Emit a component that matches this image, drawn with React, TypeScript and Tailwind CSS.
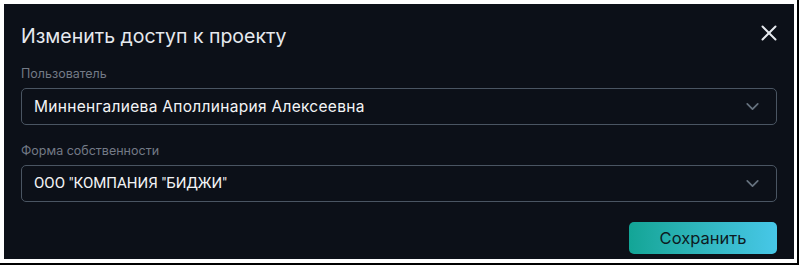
import { X, ChevronDown } from "lucide-react";

const font = { fontFamily: "Inter, 'Noto Sans', sans-serif" };

function SelectField({
  label,
  value,
  valueClass,
}: {
  label: string;
  value: string;
  valueClass: string;
}) {
  return (
    <div className="flex flex-col">
      <span className="text-[12.5px] leading-[20px] text-[#737a86]">{label}</span>
      <div className="mt-[4px] flex h-[37px] items-center justify-between rounded-[5px] border border-[#4a5562] pl-[12px] pr-[13px]">
        <span className={valueClass}>{value}</span>
        <ChevronDown size={21} strokeWidth={2} className="text-[#66717e]" />
      </div>
    </div>
  );
}

export default function App() {
  return (
    <div className="h-[265px] w-[801px] bg-white" style={font}>
      <div className="h-[265px] w-[799px] border-b-2 border-r-2 border-black pl-[4px] pt-[4px]">
        <div className="flex h-[255px] w-[790px] flex-col bg-[#0c1018] px-[17px] pt-[20px]">
          <div className="flex items-start justify-between">
            <h2 className="text-[19.5px] leading-[24px] text-[#e6e9ee]">Изменить доступ к проекту</h2>
            <X size={26} strokeWidth={1.8} className="mr-[-5px] mt-[-4px] text-[#e6e9ee]" />
          </div>
          <div className="mt-[16px] flex flex-col gap-[16px]">
            <SelectField
              label="Пользователь"
              value="Минненгалиева Аполлинария Алексеевна"
              valueClass="text-[15.5px] tracking-[0.3px] text-[#f3f4f6]"
            />
            <SelectField
              label="Форма собственности"
              value={'ООО "КОМПАНИЯ "БИДЖИ"'}
              valueClass="font-['Roboto',sans-serif] text-[15px] text-[#f3f4f6]"
            />
          </div>
          <div className="mt-[20px] flex justify-end">
            <button className="h-[32px] w-[148px] rounded-[5px] bg-gradient-to-r from-[#12a596] to-[#47c7e8] text-[16.5px] text-[#0d1a22]">
              Сохранить
            </button>
          </div>
        </div>
      </div>
    </div>
  );
}
